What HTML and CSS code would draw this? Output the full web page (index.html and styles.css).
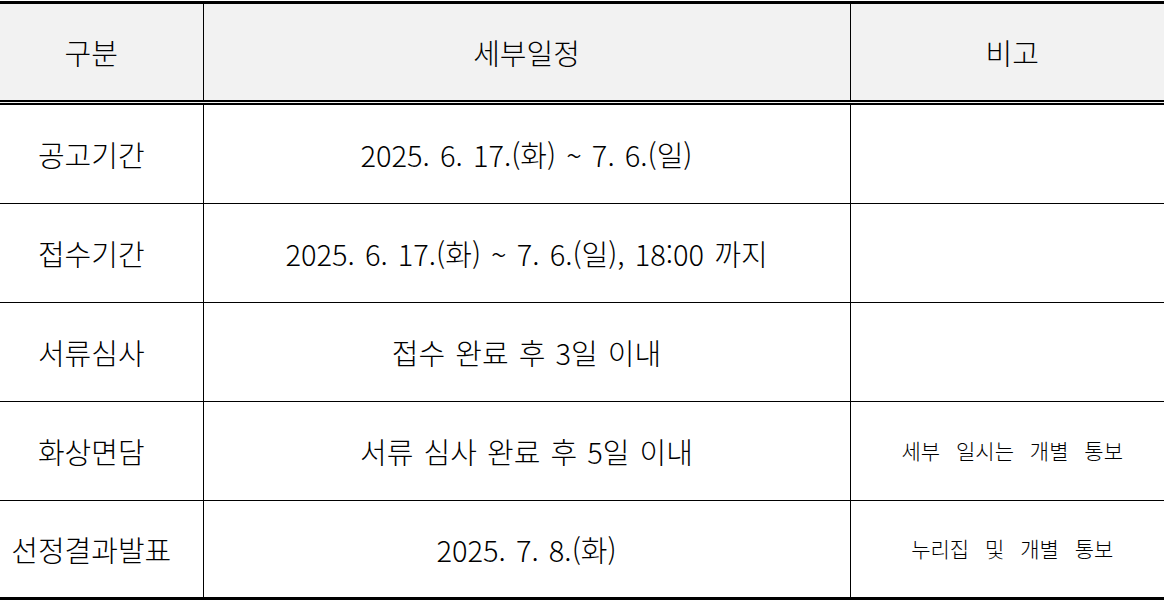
FILE: index.html
```html
<!DOCTYPE html>
<html lang="ko">
<head>
<meta charset="utf-8">
<link rel="stylesheet" href="styles.css">
</head>
<body>
<table class="schedule">
  <colgroup>
    <col class="c1"><col class="c2"><col class="c3">
  </colgroup>
  <thead>
    <tr><th class="label">구분</th><th>세부일정</th><th class="note">비고</th></tr>
  </thead>
  <tbody>
    <tr><td class="label">공고기간</td><td>2025. 6. 17.(화) ~ 7. 6.(일)</td><td class="note"></td></tr>
    <tr><td class="label">접수기간</td><td>2025. 6. 17.(화) ~ 7. 6.(일), 18:00 까지</td><td class="note"></td></tr>
    <tr><td class="label">서류심사</td><td>접수 완료 후 3일 이내</td><td class="note"></td></tr>
    <tr><td class="label">화상면담</td><td>서류 심사 완료 후 5일 이내</td><td class="note small">세부 일시는 개별 통보</td></tr>
    <tr><td class="label">선정결과발표</td><td>2025. 7. 8.(화)</td><td class="note small">누리집 및 개별 통보</td></tr>
  </tbody>
</table>
</body>
</html>
```

FILE: styles.css
```css
html, body {
  margin: 0;
  padding: 0;
  background: #fff;
}
body {
  font-family: "Noto Sans CJK KR", "Noto Sans", sans-serif;
  color: #000;
}
.schedule {
  width: 1164px;
  margin-top: 1px;
  border-collapse: collapse;
  table-layout: fixed;
  border-top: 3px solid #000;
  border-bottom: 3px solid #000;
}
.c1 { width: 203px; }
.c2 { width: 647px; }
.c3 { width: 314px; }
.schedule th,
.schedule td {
  padding: 0;
  text-align: center;
  vertical-align: middle;
  font-size: 29px;
  font-weight: 300;
  word-spacing: 2px;
  border-left: 1px solid #000;
  border-top: 1px solid #000;
  height: 98px;
  line-height: 1.2;
}
.schedule .label {
  padding-right: 20px;
}
.schedule .note {
  padding-left: 10px;
}
.schedule th:first-child,
.schedule td:first-child { border-left: none; }
.schedule thead th {
  background: #f2f2f2;
  height: 96px;
  border-top: 3px solid #000;
  border-bottom: 5px double #000;
}
.schedule tbody tr:last-child td { height: 96px; border-bottom: 3px solid #000; }
.schedule td.small {
  font-size: 21px;
  word-spacing: 10px;
}
```
